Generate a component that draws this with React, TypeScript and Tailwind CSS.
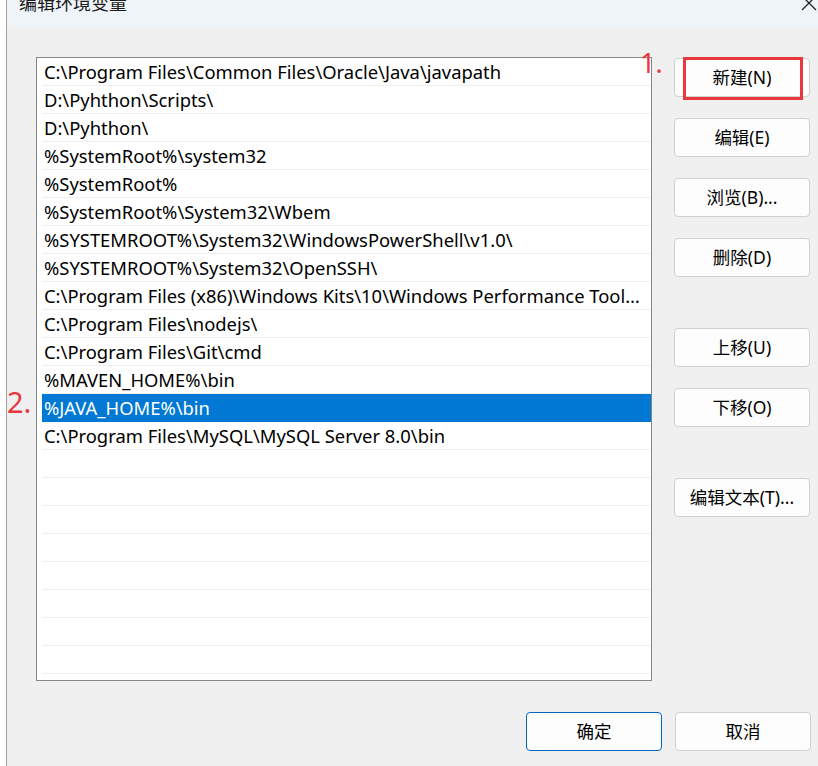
const paths = [
  "C:\\Program Files\\Common Files\\Oracle\\Java\\javapath",
  "D:\\Pyhthon\\Scripts\\",
  "D:\\Pyhthon\\",
  "%SystemRoot%\\system32",
  "%SystemRoot%",
  "%SystemRoot%\\System32\\Wbem",
  "%SYSTEMROOT%\\System32\\WindowsPowerShell\\v1.0\\",
  "%SYSTEMROOT%\\System32\\OpenSSH\\",
  "C:\\Program Files (x86)\\Windows Kits\\10\\Windows Performance Toolkit\\",
  "C:\\Program Files\\nodejs\\",
  "C:\\Program Files\\Git\\cmd",
  "%MAVEN_HOME%\\bin",
  "%JAVA_HOME%\\bin",
  "C:\\Program Files\\MySQL\\MySQL Server 8.0\\bin",
];

const rows = [...paths, ...Array(9).fill("")];
const selected = 12;

function Btn({ label, className = "" }: { label: string; className?: string }) {
  return (
    <button
      className={`w-[136px] h-[39px] rounded-[4px] bg-[#fdfdfd] text-[17.5px] text-black ${className}`}
    >
      {label}
    </button>
  );
}

export default function App() {
  return (
    <div
      className="w-[818px] h-[766px] flex overflow-hidden bg-[#f0f0f0] text-black"
      style={{ fontFamily: '"Noto Sans", "Noto Sans CJK SC", sans-serif' }}
    >
      {/* strip of the window behind */}
      <div className="w-[7px] shrink-0 bg-white border-r border-[#a0a0a0]" />

      <div className="flex-1 flex flex-col relative">
        {/* title bar */}
        <div className="h-[27px] shrink-0 bg-[#eff4f9] flex items-start justify-between overflow-hidden">
          <span className="ml-[12px] -mt-[8px] text-[18px] leading-[22px] text-[#1a1a1a]">编辑环境变量</span>
          <svg width="18" height="18" viewBox="0 0 18 18" className="-mt-[6px]">
            <path d="M2 2 L16 16 M16 2 L2 16" stroke="#222" strokeWidth="1.3" />
          </svg>
        </div>

        <div className="flex-1 flex pt-[30px]">
          {/* path list */}
          <div className="ml-[29px] w-[616px] h-[624px] shrink-0 bg-white border border-[#868686] overflow-hidden pl-[5px]">
            {rows.map((p, i) => (
              <div
                key={i}
                className={`h-[28px] flex items-center pl-[2px] pr-[2px] whitespace-nowrap text-[18.4px] ${
                  i === selected
                    ? "bg-[#0078d4] text-white"
                    : "border-b border-[#efefef]"
                }`}
              >
                <span className="truncate">{p}</span>
              </div>
            ))}
          </div>

          {/* action buttons */}
          <div className="ml-[22px] flex flex-col pt-[1px]">
            <div className="relative">
              <Btn label="新建(N)" className="border border-[#d0d0d0]" />
              <div className="absolute left-[9px] top-[-1px] w-[120px] h-[43px] border-[3px] border-[#e8383d] pointer-events-none" />
            </div>
            <Btn label="编辑(E)" className="mt-[21px] border border-[#d0d0d0]" />
            <Btn label="浏览(B)..." className="mt-[21px] border border-[#d0d0d0]" />
            <Btn label="删除(D)" className="mt-[21px] border border-[#d0d0d0]" />
            <Btn label="上移(U)" className="mt-[51px] border border-[#d0d0d0]" />
            <Btn label="下移(O)" className="mt-[21px] border border-[#d0d0d0]" />
            <Btn label="编辑文本(T)..." className="mt-[51px] border border-[#d0d0d0]" />
          </div>
        </div>

        {/* dialog buttons */}
        <div className="h-[54px] shrink-0 flex justify-end gap-[13px] pr-[7px]">
          <Btn label="确定" className="border border-[#0067c0]" />
          <Btn label="取消" className="border border-[#d0d0d0]" />
        </div>

        {/* annotations */}
        <span className="absolute left-[633px] top-[47px] text-[27px] leading-[32px] text-[#e8383d]">1.</span>
        <span className="absolute left-[0px] top-[385px] text-[29px] leading-[34px] text-[#e8383d]">2.</span>
      </div>
    </div>
  );
}
